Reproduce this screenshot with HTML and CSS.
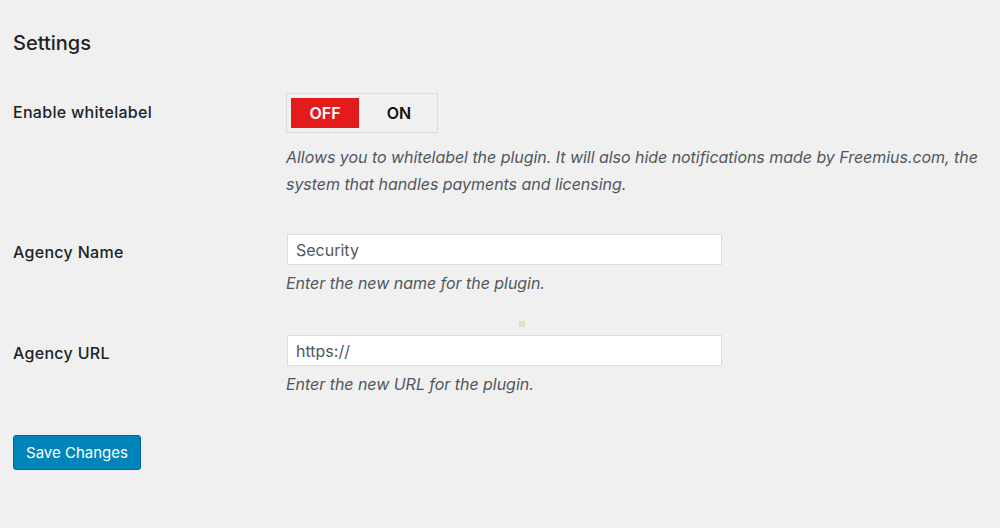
FILE: index.html
```html
<!DOCTYPE html>
<html lang="en">
<head>
<meta charset="utf-8">
<title>Settings</title>
<link rel="stylesheet" href="styles.css">
</head>
<body>
<main class="wrap">
  <h2 class="title">Settings</h2>
  <div class="form">
    <div class="row row-toggle">
      <div class="label">Enable whitelabel</div>
      <div class="field">
        <div class="toggle">
          <span class="opt opt-off">OFF</span>
          <span class="opt opt-on">ON</span>
        </div>
        <p class="desc desc-toggle">Allows you to whitelabel the plugin. It will also hide notifications made by Freemius.com, the system that handles payments and licensing.</p>
      </div>
    </div>
    <div class="row">
      <div class="label">Agency Name</div>
      <div class="field">
        <input class="text" type="text" value="Security">
        <p class="desc">Enter the new name for the plugin.</p>
      </div>
    </div>
    <div class="dot-wrap"><span class="dot"></span></div>
    <div class="row row-url">
      <div class="label">Agency URL</div>
      <div class="field">
        <input class="text" type="text" value="https://">
        <p class="desc">Enter the new URL for the plugin.</p>
      </div>
    </div>
  </div>
  <button class="btn" type="button">Save Changes</button>
</main>
</body>
</html>
```

FILE: styles.css
```css
html, body {
  margin: 0;
  padding: 0;
  background: #f0f0f1;
}
body {
  font-family: Inter, "Liberation Sans", sans-serif;
  color: #1d2327;
  width: 1000px;
  height: 528px;
  overflow: hidden;
}
.wrap {
  padding: 31px 0 0 13px;
}
.title {
  margin: 0;
  font-size: 20px;
  line-height: 24px;
  font-weight: 500;
}
.form {
  margin-top: 38px;
}
.row {
  display: grid;
  grid-template-columns: 273px 1fr;
}
.row + .row {
  margin-top: 36px;
}
.label {
  font-size: 16px;
  font-weight: 500;
  line-height: 20px;
  letter-spacing: 0.3px;
  padding-top: 8px;
}
.row-toggle .label {
  padding-top: 9px;
}
.toggle {
  display: flex;
  gap: 6px;
  width: 142px;
  padding: 4px;
  border: 1px solid #dcdcde;
  background: #f0f0f1;
}
.opt {
  width: 68px;
  height: 30px;
  display: flex;
  align-items: center;
  justify-content: center;
  font-size: 16px;
  font-weight: 600;
  color: #111;
}
.opt-off {
  background: #e31b1b;
  color: #fff;
}
.desc {
  margin: 5px 0 0;
  font-size: 16px;
  line-height: 27px;
  font-style: italic;
  letter-spacing: -0.04px;
  color: #50575e;
  max-width: 700px;
}
.desc-toggle {
  margin-top: 11px;
}
.text {
  display: block;
  box-sizing: border-box;
  width: 435px;
  height: 31px;
  margin: 0 0 0 1px;
  padding: 0 8px;
  border: 1px solid #dcdcde;
  border-radius: 0;
  background: #fff;
  font-family: inherit;
  font-size: 16px;
  color: #50575e;
  outline: none;
}
.dot-wrap {
  position: relative;
  height: 0;
}
.dot {
  position: absolute;
  left: 506px;
  top: 24px;
  width: 6px;
  height: 6px;
  background: #dbe8b5;
}
.row-url {
  margin-top: 38px;
}
.btn {
  display: block;
  margin-top: 37px;
  width: 128px;
  height: 35px;
  padding: 0;
  background: #0085ba;
  border: 1px solid #006799;
  border-radius: 3px;
  color: #fff;
  font-family: inherit;
  font-size: 15px;
  cursor: pointer;
}
```
